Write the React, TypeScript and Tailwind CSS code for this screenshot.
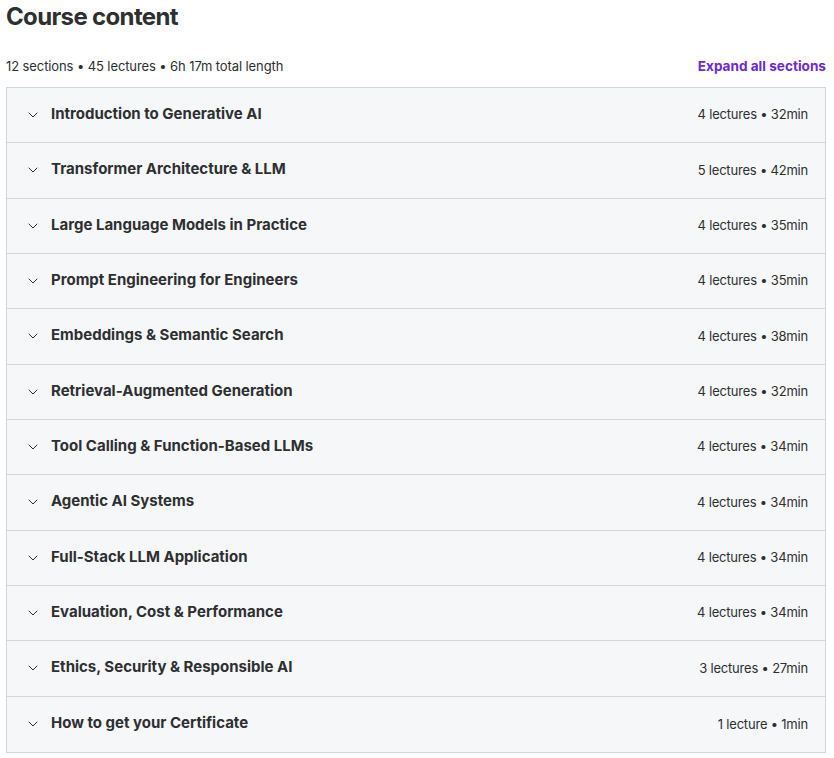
import React from "react";

const sections: [string, string][] = [
  ["Introduction to Generative AI", "4 lectures • 32min"],
  ["Transformer Architecture & LLM", "5 lectures • 42min"],
  ["Large Language Models in Practice", "4 lectures • 35min"],
  ["Prompt Engineering for Engineers", "4 lectures • 35min"],
  ["Embeddings & Semantic Search", "4 lectures • 38min"],
  ["Retrieval-Augmented Generation", "4 lectures • 32min"],
  ["Tool Calling & Function-Based LLMs", "4 lectures • 34min"],
  ["Agentic AI Systems", "4 lectures • 34min"],
  ["Full-Stack LLM Application", "4 lectures • 34min"],
  ["Evaluation, Cost & Performance", "4 lectures • 34min"],
  ["Ethics, Security & Responsible AI", "3 lectures • 27min"],
  ["How to get your Certificate", "1 lecture • 1min"],
];

function Chevron() {
  return (
    <svg width="16" height="16" viewBox="0 0 24 24" fill="none" stroke="#2d2f31" strokeWidth="1.5" strokeLinecap="round" strokeLinejoin="round">
      <path d="M6 9l6 6 6-6" />
    </svg>
  );
}

export default function App() {
  return (
    <div className="w-[834px] h-[758px] bg-white text-[#2d2f31] font-['Inter',sans-serif] pl-[6px] pr-[8px]">
      <h2 className="text-[24px] font-bold leading-[34px] tracking-[-0.65px]">Course content</h2>
      <div className="flex items-center justify-between mt-[23px] h-[20px]">
        <span className="text-[13px] tracking-[-0.1px] text-[#2d2f31]">12 sections • 45 lectures • 6h 17m total length</span>
        <button className="text-[13.6px] font-bold text-[#6d28d2] -mt-[2px]">Expand all sections</button>
      </div>
      <div className="mt-[10px] border border-[#d1d7dc] bg-[#f6f7f9]">
        {sections.map(([title, meta], i) => (
          <div
            key={i}
            className={`h-[55.33px] flex items-center pl-[18px] pr-[17px] ${i < sections.length - 1 ? "border-b border-[#d1d7dc]" : ""}`}
          >
            <Chevron />
            <span className="ml-[10px] text-[15px] font-bold -mt-[2px]">{title}</span>
            <span className="ml-auto text-[13px] tracking-[-0.2px]">{meta}</span>
          </div>
        ))}
      </div>
    </div>
  );
}
